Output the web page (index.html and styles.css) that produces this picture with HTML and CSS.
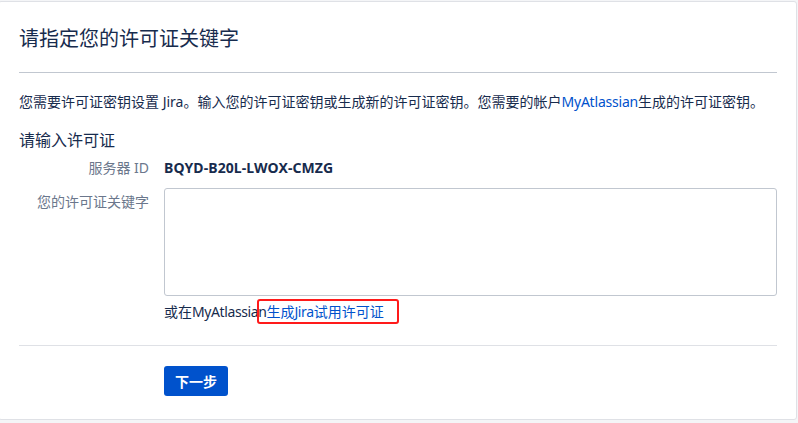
FILE: index.html
```html
<!DOCTYPE html>
<html lang="zh-CN">
<head>
<meta charset="utf-8">
<title>请指定您的许可证关键字</title>
<link rel="stylesheet" href="styles.css">
</head>
<body>
<div class="panel">
  <h1 class="title">请指定您的许可证关键字</h1>
  <hr class="rule-strong">
  <p class="intro">您需要许可证密钥设置 Jira。输入您的许可证密钥或生成新的许可证密钥。您需要的帐户<a class="link tight" href="#">MyAtlassian</a>生成的许可证密钥。</p>
  <h2 class="subtitle">请输入许可证</h2>
  <div class="row row-server">
    <div class="label">服务器 ID</div>
    <div class="value">BQYD-B20L-LWOX-CMZG</div>
  </div>
  <div class="row row-key">
    <div class="label label-key">您的许可证关键字</div>
    <div class="field">
      <textarea class="textarea"></textarea>
      <div class="hint">或在<span class="latin">MyAtlassian</span><a class="link marked" href="#">生成<span class="latin">Jira</span>试用许可证</a></div>
    </div>
  </div>
  <hr class="rule-light">
  <div class="row row-actions">
    <div class="label"></div>
    <button class="btn">下一步</button>
  </div>
</div>
</body>
</html>
```

FILE: styles.css
```css
* { box-sizing: border-box; }
html, body { margin: 0; padding: 0; }
body {
  background: #f4f5f7;
  font-family: "Noto Sans", "Noto Sans CJK SC", sans-serif;
  color: #172b4d;
  font-size: 14px;
  height: 423px;
  overflow: hidden;
}
.panel {
  margin: 1px 1px 0 -2px;
  background: #fff;
  border: 1px solid #dfe1e6;
  border-radius: 3px;
  padding: 25px 19px 23px 20px;
}
.title {
  margin: 0;
  font-size: 20px;
  line-height: 24px;
  font-weight: 400;
  color: #172b4d;
}
.rule-strong {
  margin: 21px 0 0;
  border: 0;
  border-top: 1px solid #c1c7d0;
  height: 0;
}
.rule-light {
  margin: 23px 0 0;
  border: 0;
  border-top: 1px solid #dfe1e6;
  height: 0;
}
.intro {
  margin: 19px 0 0;
  line-height: 20px;
  font-size: 14px;
  white-space: nowrap;
}
.link { color: #0052cc; text-decoration: none; }
.tight { letter-spacing: -0.2px; }
.subtitle {
  margin: 18px 0 0;
  font-size: 16px;
  line-height: 20px;
  font-weight: 400;
}
.row {
  display: flex;
  gap: 15px;
}
.label {
  width: 130px;
  flex: 0 0 130px;
  text-align: right;
  color: #6b778c;
  line-height: 20px;
}
.row-server { margin-top: 8px; }
.value {
  font-weight: 700;
  line-height: 20px;
  letter-spacing: 0.1px;
}
.row-key { margin-top: 10px; }
.label-key { padding-top: 4px; }
.field { flex: 1; display: flex; flex-direction: column; }
.textarea {
  display: block;
  width: 100%;
  height: 108px;
  border: 1px solid #c1c7d0;
  border-radius: 3px;
  resize: none;
  margin: 0;
  font: inherit;
}
.hint {
  margin-top: 6px;
  line-height: 20px;
  white-space: nowrap;
}
.hint .latin { letter-spacing: -0.4px; }
.marked { position: relative; }
.marked::after {
  content: "";
  position: absolute;
  left: -9px;
  right: -15px;
  top: -3px;
  bottom: -3px;
  border: 2px solid #ff1a1a;
  border-radius: 3px;
}
.row-actions { margin-top: 20px; }
.btn {
  width: 64px;
  height: 30px;
  border: 0;
  border-radius: 3px;
  background: #0052cc;
  color: #fff;
  font-family: inherit;
  font-size: 14px;
  font-weight: 700;
  padding: 0;
}
```
